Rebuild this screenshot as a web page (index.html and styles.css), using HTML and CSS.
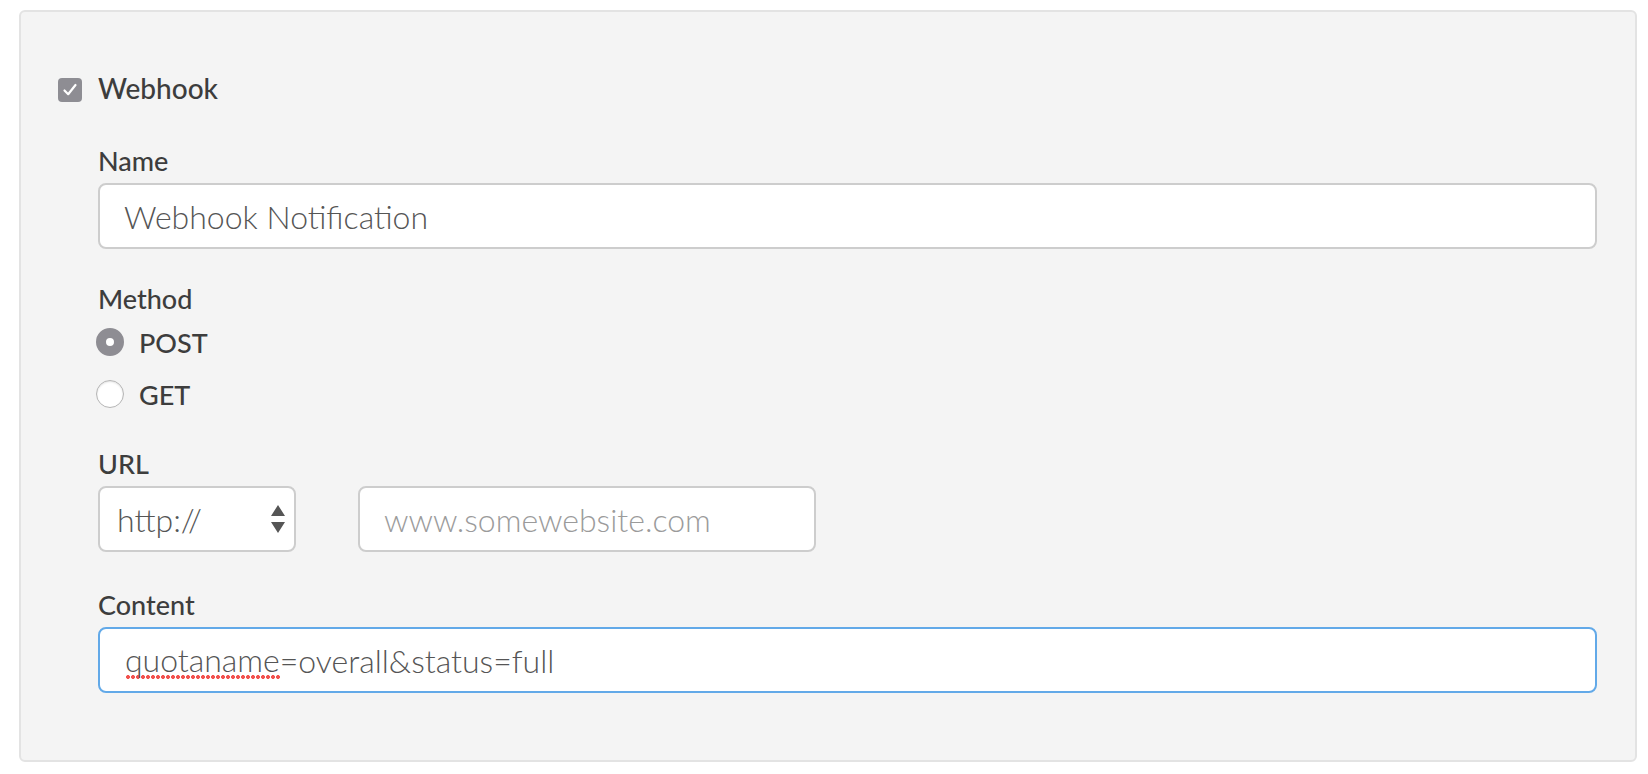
FILE: index.html
```html
<!DOCTYPE html>
<html lang="en">
<head>
    <meta charset="UTF-8">
    <title>Webhook</title>
    <link rel="stylesheet" href="styles.css">
</head>
<body>
    <div class="panel">
        <div class="check-row">
            <span class="checkbox">
                <svg width="20" height="20" viewBox="0 0 20 20"><path d="M4.5 10.5 L8.2 14.2 L15.5 5" fill="none" stroke="#fff" stroke-width="2.2" stroke-linecap="round" stroke-linejoin="round"/></svg>
            </span>
            <span class="check-label">Webhook</span>
        </div>

        <div class="fields">
            <div class="field">
                <label class="field-label">Name</label>
                <div class="text-box wide">Webhook Notification</div>
            </div>

            <div class="field method">
                <label class="field-label">Method</label>
                <div class="radio-row">
                    <span class="radio checked"></span>
                    <span class="radio-label">POST</span>
                </div>
                <div class="radio-row">
                    <span class="radio"></span>
                    <span class="radio-label">GET</span>
                </div>
            </div>

            <div class="field url">
                <label class="field-label">URL</label>
                <div class="url-row">
                    <div class="text-box select-box">
                        <span>http://</span>
                        <svg class="arrows" width="14" height="30" viewBox="0 0 14 30"><path d="M7 0 L14 11 L0 11 Z M0 17 L14 17 L7 28 Z" fill="#555"/></svg>
                    </div>
                    <div class="text-box url-box placeholder">www.somewebsite.com</div>
                </div>
            </div>

            <div class="field">
                <label class="field-label">Content</label>
                <div class="text-box wide focused"><span class="misspelled">quotaname</span>=overall&amp;status=full</div>
            </div>
        </div>
    </div>
</body>
</html>
```

FILE: styles.css
```css
body {
    margin: 0;
    background: #fff;
    font-family: Lato, 'Noto Sans', sans-serif;
    color: #444;
}

.panel {
    margin: 10px 0 0 19px;
    width: 1618px;
    height: 752px;
    box-sizing: border-box;
    background-color: #f4f4f4;
    border: 2px solid #e3e3e3;
    border-radius: 6px;
    padding: 58px 38px 0 37px;
}

.check-row {
    display: flex;
    align-items: center;
    height: 36px;
}

.checkbox {
    width: 24px;
    height: 24px;
    border-radius: 4px;
    background-color: #8e8d93;
    display: flex;
    align-items: center;
    justify-content: center;
    margin-right: 16px;
    margin-top: 4px;
}

.check-label {
    font-size: 28px;
    line-height: 36px;
    font-weight: 500;
    color: #3d3d3d;
}

.fields {
    margin-left: 40px;
    margin-top: 37px;
}

.field {
    margin-bottom: 32px;
}

.field.method {
    margin-bottom: 34px;
}

.field.url {
    margin-bottom: 35px;
}

.field-label {
    display: block;
    font-size: 27px;
    line-height: 36px;
    font-weight: 500;
    color: #3d3d3d;
    margin-bottom: 4px;
}

.text-box {
    height: 66px;
    box-sizing: border-box;
    background-color: #fff;
    border: 2px solid #cdcdcd;
    border-radius: 8px;
    display: flex;
    align-items: center;
    padding-left: 24px;
    font-size: 32px;
    font-weight: 300;
    color: #555;
}

.wide {
    width: 100%;
}

.focused {
    border-color: #62a9e8;
    padding-left: 25px;
}

.misspelled {
    background-image: radial-gradient(circle at 3px 3px, #f2524e 1.8px, transparent 2.2px);
    background-repeat: repeat-x;
    background-position: 0 100%;
    background-size: 5px 6px;
    padding-bottom: 1px;
}

.radio-row {
    display: flex;
    align-items: center;
    height: 36px;
    margin-top: 16px;
    margin-left: -2px;
}

.radio-row:first-of-type {
    margin-top: 7px;
}

.radio {
    width: 28px;
    height: 28px;
    box-sizing: border-box;
    border-radius: 50%;
    background: #fff;
    border: 1px solid #b5b5b5;
    box-shadow: inset 0 1px 2px rgba(0, 0, 0, 0.12);
    margin-right: 15px;
}

.radio.checked {
    border: 10px solid #8e8d93;
    box-shadow: none;
}

.radio-label {
    font-size: 27px;
    font-weight: 500;
    color: #3d3d3d;
}

.url-row {
    display: flex;
    gap: 62px;
}

.select-box {
    width: 198px;
    padding-left: 17px;
    padding-right: 9px;
    justify-content: space-between;
}

.arrows {
    margin-top: 2px;
}

.url-box {
    width: 458px;
}

.placeholder {
    color: #9b9b9b;
}
```
